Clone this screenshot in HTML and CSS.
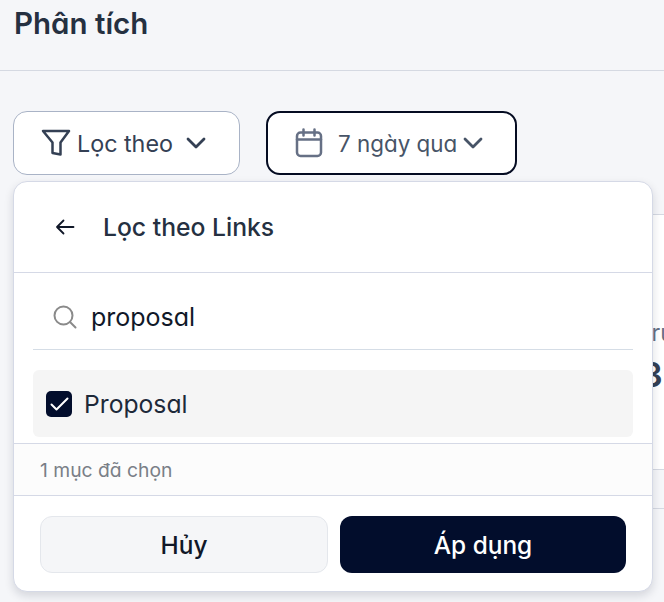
FILE: index.html
```html
<!DOCTYPE html>
<html lang="vi">
<head>
<meta charset="utf-8">
<title>Phân tích</title>
<link rel="stylesheet" href="styles.css">
</head>
<body>
<header class="page-head"><h1>Phân tích</h1></header>
<main class="content">
  <div class="toolbar">
    <button class="pill pill-filter">
      <svg class="ic-filter" viewBox="0 0 30 28" fill="none" stroke="#344054" stroke-width="2.500" stroke-linejoin="round" stroke-linecap="round"><path d="M2 2h26L19.500 13.500V25.500L11.500 24V13.500z"/></svg>
      <span>Lọc theo</span>
      <svg class="ic-chev chev-a" viewBox="0 0 20 12" fill="none" stroke="#344054" stroke-width="2.800" stroke-linecap="round" stroke-linejoin="round"><path d="M2 2l8 8 8-8"/></svg>
    </button>
    <button class="pill pill-date">
      <svg class="ic-cal" viewBox="0 0 28 30" fill="none" stroke="#667085" stroke-width="2.500" stroke-linecap="round" stroke-linejoin="round"><rect x="2" y="4.500" width="24" height="23.500" rx="3.500"/><path d="M2 11.500h24M8.500 1.500v6M19.500 1.500v6"/></svg>
      <span class="date-label">7 ngày qua</span>
      <svg class="ic-chev" viewBox="0 0 20 12" fill="none" stroke="#475467" stroke-width="2.800" stroke-linecap="round" stroke-linejoin="round"><path d="M2 2l8 8 8-8"/></svg>
    </button>

    <section class="popover">
      <div class="pop-head">
        <svg class="ic-back" viewBox="0 0 20 16" fill="none" stroke="#101828" stroke-width="1.800" stroke-linecap="round" stroke-linejoin="round"><path d="M18.500 8H2M8.500 1.500L2 8l6.500 6.500"/></svg>
        <h2>Lọc theo Links</h2>
      </div>
      <div class="pop-search">
        <div class="search-row">
          <svg class="ic-search" viewBox="0 0 24 24" fill="none" stroke="#8a8a8a" stroke-width="2" stroke-linecap="round"><circle cx="10.500" cy="10.500" r="9"/><path d="M17 17l5.500 5.500"/></svg>
          <span class="query">proposal</span>
        </div>
      </div>
      <div class="pop-list">
        <div class="option">
          <span class="check"><svg viewBox="0 0 19 14" fill="none" stroke="#fff" stroke-width="2" stroke-linecap="round" stroke-linejoin="round"><path d="M1.500 7.500l5 5L17.500 1.500"/></svg></span>
          <span class="option-label">Proposal</span>
        </div>
      </div>
      <div class="pop-status">1 mục đã chọn</div>
      <div class="pop-actions">
        <button class="btn btn-cancel">Hủy</button>
        <button class="btn btn-apply">Áp dụng</button>
      </div>
    </section>
  </div>

  <div class="card">
    <div class="card-stats">
      <div class="stat">
        <div class="stat-label">Tru</div>
        <div class="stat-value">3</div>
      </div>
    </div>
    <div class="card-row"></div>
  </div>
</main>
</body>
</html>
```
FILE: styles.css
```css
* { box-sizing: border-box; }
html, body { height: 100%; }
body {
  margin: 0;
  overflow: hidden;
  background: #f5f6f9;
  color: #1d2939;
  font-family: "Inter", "Liberation Sans", sans-serif;
  font-feature-settings: "cv11" 1;
}
button { font-family: inherit; font-feature-settings: inherit; cursor: pointer; }

.page-head {
  height: 71px;
  padding: 5px 14px 0;
  border-bottom: 1px solid #d5d9e2;
}
.page-head h1 {
  margin: 0;
  font-size: 29.5px;
  line-height: 36px;
  font-weight: 600;
  color: #253041;
}

.content { padding: 40px 0 0 13px; }

.toolbar {
  position: relative;
  display: flex;
  gap: 26px;
}
.pill {
  display: flex;
  align-items: center;
  height: 64px;
  padding: 0;
  background: #fff;
}
.pill-filter {
  width: 227px;
  border: 1px solid #a9b3c6;
  border-radius: 14px;
  padding-left: 27px;
  font-size: 23.3px;
  color: #344054;
}
.pill-date {
  width: 251px;
  border: 2px solid #050c22;
  border-radius: 14px;
  padding-left: 27px;
  font-size: 22.4px;
  color: #475467;
}
.ic-filter { width: 30px; height: 28px; margin-right: 6px; }
.ic-chev { width: 20px; height: 12px; margin-left: 6px; }
.chev-a { margin-left: 13px; }
.ic-cal { width: 28px; height: 30px; margin-right: 15px; }

.popover {
  position: absolute;
  left: 0;
  top: 70px;
  z-index: 2;
  width: 640px;
  height: 411px;
  display: flex;
  flex-direction: column;
  background: #fff;
  border: 1px solid #d5d9e6;
  border-radius: 14px;
  box-shadow: 0 4px 10px rgba(16, 24, 40, .14);
  overflow: hidden;
}
.pop-head {
  display: flex;
  align-items: center;
  gap: 28px;
  height: 91px;
  flex: none;
  padding: 0 0 0 41px;
  border-bottom: 1px solid #d5d9e6;
}
.pop-head h2 {
  margin: 0;
  font-size: 24.7px;
  font-weight: 500;
  color: #253041;
}
.ic-back { width: 20px; height: 16px; }
.pop-search { padding: 0 19px; flex: none; }
.search-row {
  display: flex;
  align-items: center;
  gap: 14px;
  height: 77px;
  padding: 12px 0 0 20px;
  border-bottom: 1px solid #d5dde6;
}
.ic-search { width: 24px; height: 24px; }
.query { font-size: 25px; color: #101828; }
.pop-list { padding: 20px 19px 6px; flex: none; }
.option {
  display: flex;
  align-items: center;
  gap: 12px;
  height: 67px;
  padding-left: 13px;
  background: #f5f5f5;
  border-radius: 6px;
}
.check {
  display: flex;
  align-items: center;
  justify-content: center;
  width: 26px;
  height: 26px;
  background: #020d2c;
  border-radius: 5px;
}
.check svg { width: 19px; height: 14px; }
.option-label { font-size: 24.7px; color: #1d2939; }
.pop-status {
  display: flex;
  align-items: center;
  flex: none;
  height: 53px;
  padding-left: 26px;
  background: #fcfcfc;
  border-top: 1px solid #d5d9e6;
  border-bottom: 1px solid #d5d9e6;
  font-size: 19.3px;
  color: #7a7f87;
}
.pop-actions {
  display: flex;
  gap: 12px;
  padding: 20px 26px 0;
}
.btn {
  height: 57px;
  border-radius: 12px;
  font-size: 24.4px;
  font-weight: 500;
}
.btn-cancel {
  width: 288px;
  background: #f5f6f8;
  border: 1px solid #e4e7ec;
  color: #101828;
}
.btn-apply {
  width: 286px;
  background: #020d2c;
  border: 0;
  color: #fff;
}

.card {
  margin-top: 39px;
  background: #fff;
  border-top: 1px solid #d5d9e2;
  width: 700px;
}
.card-stats {
  display: flex;
  height: 254px;
  padding: 104px 0 0 625px;
}
.stat-label { font-size: 23px; color: #667085; line-height: 28px; }
.stat-value { font-size: 34px; font-weight: 600; color: #344054; line-height: 44px; margin: 6px 0 0 3px; }
.card-row {
  height: 40px;
  background: #f5f6f9;
  border-top: 1px solid #d5d9e2;
  border-bottom: 1px solid #d5d9e2;
}
```
